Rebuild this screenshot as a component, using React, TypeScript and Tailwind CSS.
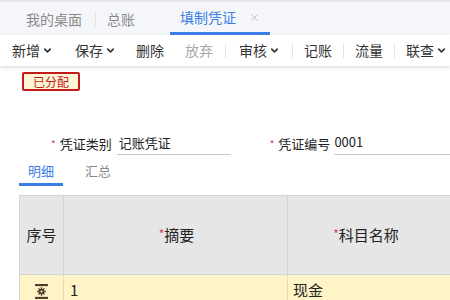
import { ChevronDown, X } from 'lucide-react';

const font = { fontFamily: '"Noto Sans CJK SC", "Noto Sans", sans-serif' };

function Sep() {
  return <span className="w-px h-[14px] bg-[#e2e2e2] shrink-0" />;
}

function ToolItem({ label, drop, muted }: { label: string; drop?: boolean; muted?: boolean }) {
  return (
    <span className={`flex items-center gap-[2px] whitespace-nowrap shrink-0 ${muted ? 'text-[#a8a8a8]' : 'text-[#333]'}`}>
      {label}
      {drop && <ChevronDown className="w-[11px] h-[11px]" strokeWidth={3.5} />}
    </span>
  );
}

function RowIcon() {
  return (
    <svg width="13" height="15" viewBox="0 0 12 14">
      <rect x="0" y="0" width="12" height="2" fill="#4a3f2a" />
      <rect x="0" y="12" width="12" height="2" fill="#4a3f2a" />
      <circle cx="6" cy="7" r="2.6" fill="#4a3f2a" />
      <path d="M6 3v8M2 7h8M3.2 4.2l5.6 5.6M8.8 4.2l-5.6 5.6" stroke="#4a3f2a" strokeWidth="1.3" />
      <circle cx="6" cy="7" r="1" fill="#fff4c8" />
    </svg>
  );
}

export default function App() {
  return (
    <div className="w-[450px] h-[300px] overflow-hidden bg-white whitespace-nowrap" style={font}>
      {/* Tab bar */}
      <div className="h-[35px] bg-[#f4f6fa] border-t-2 border-[#e4e6ea] flex items-end text-[14px]">
        <div className="flex items-center h-[32px] pl-[26px]">
          <span className="text-[#8a8a8a]">我的桌面</span>
          <span className="w-px h-[16px] bg-[#e0e2e6] ml-[13px] mr-[11px]" />
          <span className="text-[#8a8a8a]">总账</span>
        </div>
        <div className="ml-[35px] w-[100px] h-[32px] border-b-[3px] border-[#3d7ee6] flex items-center pl-[10px] gap-[13px] shrink-0">
          <span className="text-[#3d7ee6]">填制凭证</span>
          <X className="w-[11px] h-[11px] text-[#b0b0b0]" strokeWidth={1.8} />
        </div>
      </div>

      {/* Toolbar */}
      <div className="h-[31px] bg-white flex items-center text-[14px] pl-[12px] shadow-[0_2px_4px_rgba(0,0,0,0.12)] relative">
        <ToolItem label="新增" drop />
        <span className="w-[22px] shrink-0" />
        <ToolItem label="保存" drop />
        <span className="w-[20px] shrink-0" />
        <ToolItem label="删除" />
        <span className="w-[21px] shrink-0" />
        <ToolItem label="放弃" muted />
        <span className="w-[12px] shrink-0" />
        <Sep />
        <span className="w-[13px] shrink-0" />
        <ToolItem label="审核" drop />
        <span className="w-[12px] shrink-0" />
        <Sep />
        <span className="w-[11px] shrink-0" />
        <ToolItem label="记账" />
        <span className="w-[11px] shrink-0" />
        <Sep />
        <span className="w-[11px] shrink-0" />
        <ToolItem label="流量" />
        <span className="w-[11px] shrink-0" />
        <Sep />
        <span className="w-[11px] shrink-0" />
        <ToolItem label="联查" drop />
      </div>

      {/* Status badge */}
      <div className="flex pl-[22px] pt-[6px]">
        <span className="flex items-center justify-center w-[58px] h-[19px] border-2 border-[#c41a1a] bg-[#fff6d6] text-[#c41a1a] text-[12px] leading-none rounded-[2px]">
          已分配
        </span>
      </div>

      {/* Header fields */}
      <div className="flex items-end mt-[40px] text-[13px] text-[#222] h-[24px]">
        <div className="flex items-center pl-[51px] shrink-0">
          <span className="text-[#d0435a] text-[10px] mr-[4px]">*</span>
          <span>凭证类别</span>
          <span className="ml-[5px] w-[114px] pl-[2px] border-b border-[#c8c8c8] pb-[2px]">记账凭证</span>
        </div>
        <div className="flex items-center pl-[39px] shrink-0">
          <span className="text-[#d0435a] text-[10px] mr-[4px]">*</span>
          <span>凭证编号</span>
          <span className="ml-[4px] w-[120px] border-b border-[#c8c8c8] pb-[3px]">0001</span>
        </div>
      </div>

      {/* Detail tabs */}
      <div className="flex items-end h-[31px] pl-[19px] text-[13px]">
        <div className="w-[44px] h-[27px] flex items-center justify-center border-b-[3px] border-[#3d7ee6] text-[#3d7ee6]">
          明细
        </div>
        <div className="ml-[22px] h-[27px] flex items-center text-[#888] pb-[3px]">汇总</div>
      </div>

      {/* Table */}
      <div className="mt-[9px] ml-[19px] border-t border-l border-[#d4d4d4] text-[#222]">
        <div className="flex h-[79px] bg-[#e6e6e6] border-b border-[#d4d4d4] text-[15px]">
          <div className="w-[44px] flex items-center justify-center border-r border-[#d4d4d4]">序号</div>
          <div className="w-[224px] flex items-center justify-center border-r border-[#d4d4d4] pl-[2px]">
            <span className="text-[#d0435a] text-[12px] self-start mt-[29px]">*</span>摘要
          </div>
          <div className="flex-1 flex items-center justify-center pr-[6px]">
            <span className="text-[#d0435a] text-[12px] self-start mt-[29px]">*</span>科目名称
          </div>
        </div>
        <div className="flex h-[30px] bg-[#fff4c8] text-[15px]">
          <div className="w-[44px] flex items-start pt-[9px] justify-center border-r border-[#e8dcae]">
            <RowIcon />
          </div>
          <div className="w-[224px] pl-[6px] pt-[4px] border-r border-[#e8dcae]">1</div>
          <div className="flex-1 pl-[5px] pt-[4px]">现金</div>
        </div>
      </div>
    </div>
  );
}
